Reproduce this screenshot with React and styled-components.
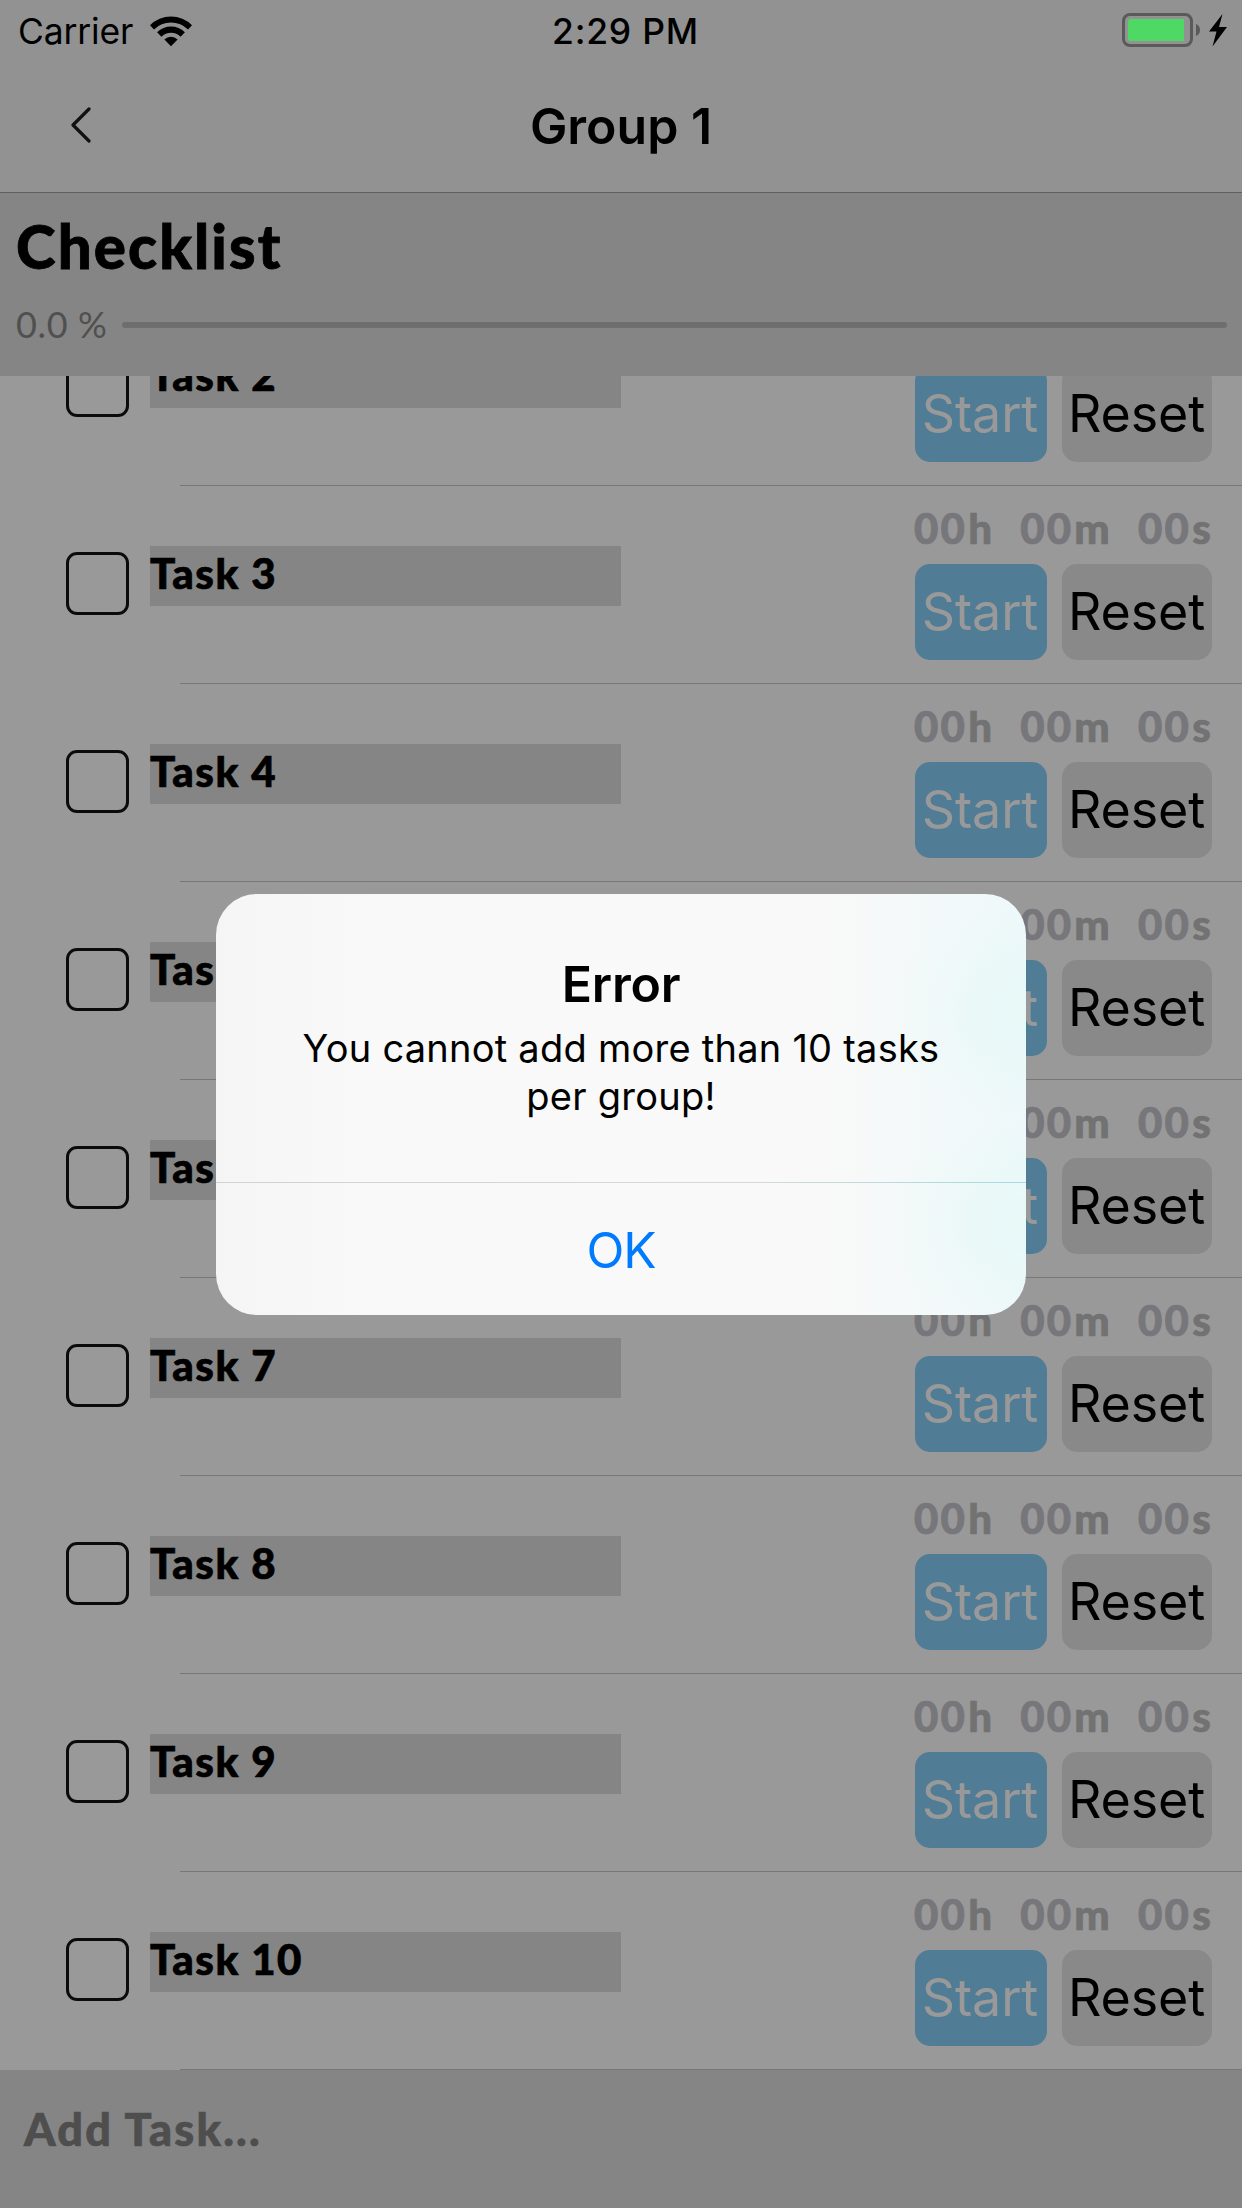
import React from "react";
import styled, { createGlobalStyle } from "styled-components";

const GlobalStyle = createGlobalStyle`
  * { box-sizing: border-box; }
  body { margin: 0; background: #999999; }
`;

const system = `Inter, "Liberation Sans", sans-serif`;
const rounded = `Lato, "Open Sans", sans-serif`;

const Screen = styled.div`
  position: relative;
  display: flex;
  flex-direction: column;
  width: 1242px;
  height: 2208px;
  overflow: hidden;
  background: #999999;
  color: #000;
  font-family: ${system};
`;

const NavArea = styled.header`
  height: 193px;
  background: #929292;
  border-bottom: 1px solid #5f5f5f;
`;

const StatusBar = styled.div`
  display: grid;
  grid-template-columns: 1fr auto 1fr;
  align-items: center;
  height: 62px;
  padding: 0 15px 0 18px;
  line-height: 40px;
`;

const Carrier = styled.div`
  display: flex;
  align-items: center;
  gap: 17px;
  font-size: 35.5px;
  letter-spacing: -0.15px;
`;

const StatusText = styled.span`
  padding-top: 2px;
`;

const Clock = styled.div`
  padding: 2px 0 0 6px;
  font-size: 35.5px;
  font-weight: 500;
  letter-spacing: 0.75px;
`;

const Power = styled.div`
  display: flex;
  justify-content: flex-end;
  align-items: center;
  padding-bottom: 2px;
`;

const TitleBar = styled.div`
  display: grid;
  grid-template-columns: 200px 1fr 200px;
  align-items: center;
  height: 128px;
`;

const BackButton = styled.button`
  display: flex;
  justify-self: start;
  padding: 0 0 2px;
  margin-left: 69px;
  border: 0;
  background: none;
`;

const NavTitle = styled.h1`
  margin: 0;
  text-align: center;
  font-size: 50px;
  font-weight: 600;
  line-height: 60px;
`;

const Summary = styled.section`
  height: 183px;
  padding: 17px 15px 0 15px;
  background: #858585;
  font-family: ${rounded};
`;

const SummaryTitle = styled.h2`
  margin: 0;
  padding-left: 1px;
  font-size: 60px;
  font-weight: 900;
  line-height: 72px;
  letter-spacing: 2.1px;
  -webkit-text-stroke: 0.8px #000;
`;

const ProgressRow = styled.div`
  display: flex;
  align-items: center;
  height: 84px;
`;

const Percent = styled.span`
  width: 107px;
  padding: 0 0 0 1px;
  font-size: 36px;
  letter-spacing: 0.63px;
  color: #505050;
`;

const Track = styled.div`
  flex: 1;
  height: 6px;
  margin-top: 2px;
  border-radius: 3px;
  background: #6e6e6e;
`;

const List = styled.ul`
  height: 1694px;
  margin: 0;
  padding: 0;
  overflow: hidden;
  list-style: none;
`;

const Row = styled.li`
  height: 198px;
  &:first-child { margin-top: -88px; }
`;

const RowBody = styled.div`
  display: flex;
  align-items: flex-start;
  height: 197px;
  padding: 0 30px 0 66px;
`;

const Divider = styled.div`
  height: 1px;
  margin-left: 180px;
  background: #777777;
`;

const Checkbox = styled.span`
  width: 63px;
  height: 63px;
  margin-top: 66px;
  border: 3px solid #0b0b0b;
  border-radius: 11px;
`;

const TaskName = styled.div`
  width: 471px;
  height: 60px;
  margin: 60px 0 0 21px;
  background: #858585;
  font: 900 42px/54px ${rounded};
  letter-spacing: 1.5px;
  -webkit-text-stroke: 0.7px #000;
`;

const Controls = styled.div`
  width: 297px;
  margin-left: auto;
  padding-top: 12px;
`;

const Timer = styled.div`
  display: flex;
  justify-content: space-between;
  width: 298px;
  height: 60px;
  margin: 0 0 6px -1px;
  color: #77767b;
  font: 900 42px/60px ${rounded};
  letter-spacing: 2.2px;
  -webkit-text-stroke: 0.7px currentColor;
`;

const Unit = styled.span`
  margin: 0 -1px 0 1px;
  color: #727272;
`;

const Buttons = styled.div`
  display: flex;
  gap: 15px;
`;

const ActionButton = styled.button`
  width: ${(p) => (p.$primary ? 132 : 150)}px;
  height: 96px;
  padding: ${(p) => (p.$primary ? "0 2px 0 0" : "0 1px 0 0")};
  border: 0;
  border-radius: 15px;
  background: ${(p) => (p.$primary ? "#507c96" : "#898989")};
  color: ${(p) => (p.$primary ? "#999999" : "#000")};
  font: 400 52px/60px ${system};
  letter-spacing: -0.15px;
`;

const AddTask = styled.footer`
  height: 138px;
  padding-left: 24px;
  background: #858585;
  color: #4e4e4e;
  font: 900 45px/118px ${rounded};
  letter-spacing: 2.2px;
  -webkit-text-stroke: 0.7px currentColor;
`;

const Backdrop = styled.div`
  position: absolute;
  inset: 0;
  display: flex;
  justify-content: center;
  align-items: flex-start;
  padding-top: 894px;
`;

const Alert = styled.div`
  width: 810px;
  height: 421px;
  overflow: hidden;
  border-radius: 41px;
  text-align: center;
  background:
    radial-gradient(ellipse 140px 110px at 100% 118px, rgba(228, 249, 247, 0.7), rgba(228, 249, 247, 0)),
    radial-gradient(ellipse 140px 110px at 100% 330px, rgba(228, 249, 247, 0.7), rgba(228, 249, 247, 0)),
    linear-gradient(90deg, #f5f5f5 0, #f9f9f9 150px, #f9f9f9 610px, #f4f9f9 700px, #eef8fa 100%);
`;

const AlertBody = styled.div`
  height: 288px;
  padding-top: 60px;
`;

const AlertTitle = styled.h3`
  margin: 0 0 10px;
  font-size: 50px;
  font-weight: 600;
  line-height: 60px;
  letter-spacing: -0.2px;
`;

const Message = styled.p`
  width: 660px;
  margin: 0 auto;
  font-size: 38px;
  line-height: 48px;
  letter-spacing: 0.25px;
`;

const AlertRule = styled.div`
  height: 1px;
  background: linear-gradient(90deg, #d2d2d2, #d6d8d9 65%, #a6dade);
`;

const OkButton = styled.button`
  display: block;
  width: 100%;
  height: 132px;
  padding: 2px 0 0;
  border: 0;
  background: none;
  color: #007aff;
  font: 400 49.5px/60px ${system};
  letter-spacing: -1px;
`;

const WifiIcon = () => (
  <svg width="42" height="31" viewBox="0 0 42 31">
    <path d="M0 9.300A29.600 29.600 0 0 1 42 9.300L38 13.500A24 24 0 0 0 4 13.500Z" />
    <path d="M7.100 16.300A19.700 19.700 0 0 1 34.900 16.300L30.600 20.700A13.500 13.500 0 0 0 11.400 20.700Z" />
    <path d="M14.400 23.400A9.500 9.500 0 0 1 27.600 23.400L21 30.200Z" />
  </svg>
);

const BatteryIcon = () => (
  <svg width="105" height="34" viewBox="0 0 105 34">
    <rect x="1.5" y="1.5" width="68" height="31" rx="6.5" fill="none" stroke="#5a5a5a" strokeWidth="3" />
    <path d="M9 6H62V28H9Q6 28 6 25V9Q6 6 9 6Z" fill="#4ed964" />
    <path d="M74 11Q78 12.500 78 17Q78 21.500 74 23Z" fill="#5a5a5a" />
    <path d="M100.500 1L87 18.500H94.500L90.500 33.500L105 14H97Z" fill="#000" />
  </svg>
);

const BackIcon = () => (
  <svg width="22" height="38" viewBox="0 0 22 38" fill="none" stroke="#111" strokeWidth="3.2" strokeLinecap="round" strokeLinejoin="round">
    <path d="M20 3L4 19L20 35" />
  </svg>
);

const tasks = [2, 3, 4, 5, 6, 7, 8, 9, 10];

const TaskRow = ({ name }) => (
  <Row>
    <RowBody>
      <Checkbox />
      <TaskName>{name}</TaskName>
      <Controls>
        <Timer>
          <span>00<Unit>h</Unit></span>
          <span>00<Unit>m</Unit></span>
          <span>00<Unit>s</Unit></span>
        </Timer>
        <Buttons>
          <ActionButton $primary>Start</ActionButton>
          <ActionButton>Reset</ActionButton>
        </Buttons>
      </Controls>
    </RowBody>
    <Divider />
  </Row>
);

export default function App() {
  return (
    <>
      <GlobalStyle />
      <Screen>
        <NavArea>
          <StatusBar>
            <Carrier><StatusText>Carrier</StatusText><WifiIcon /></Carrier>
            <Clock>2:29 PM</Clock>
            <Power><BatteryIcon /></Power>
          </StatusBar>
          <TitleBar>
            <BackButton aria-label="Back"><BackIcon /></BackButton>
            <NavTitle>Group 1</NavTitle>
          </TitleBar>
        </NavArea>
        <Summary>
          <SummaryTitle>Checklist</SummaryTitle>
          <ProgressRow>
            <Percent>0.0 %</Percent>
            <Track />
          </ProgressRow>
        </Summary>
        <List>
          {tasks.map((n) => <TaskRow key={n} name={`Task ${n}`} />)}
        </List>
        <AddTask>Add Task...</AddTask>
        <Backdrop>
          <Alert role="alertdialog">
            <AlertBody>
              <AlertTitle>Error</AlertTitle>
              <Message>You cannot add more than 10 tasks per group!</Message>
            </AlertBody>
            <AlertRule />
            <OkButton>OK</OkButton>
          </Alert>
        </Backdrop>
      </Screen>
    </>
  );
}
